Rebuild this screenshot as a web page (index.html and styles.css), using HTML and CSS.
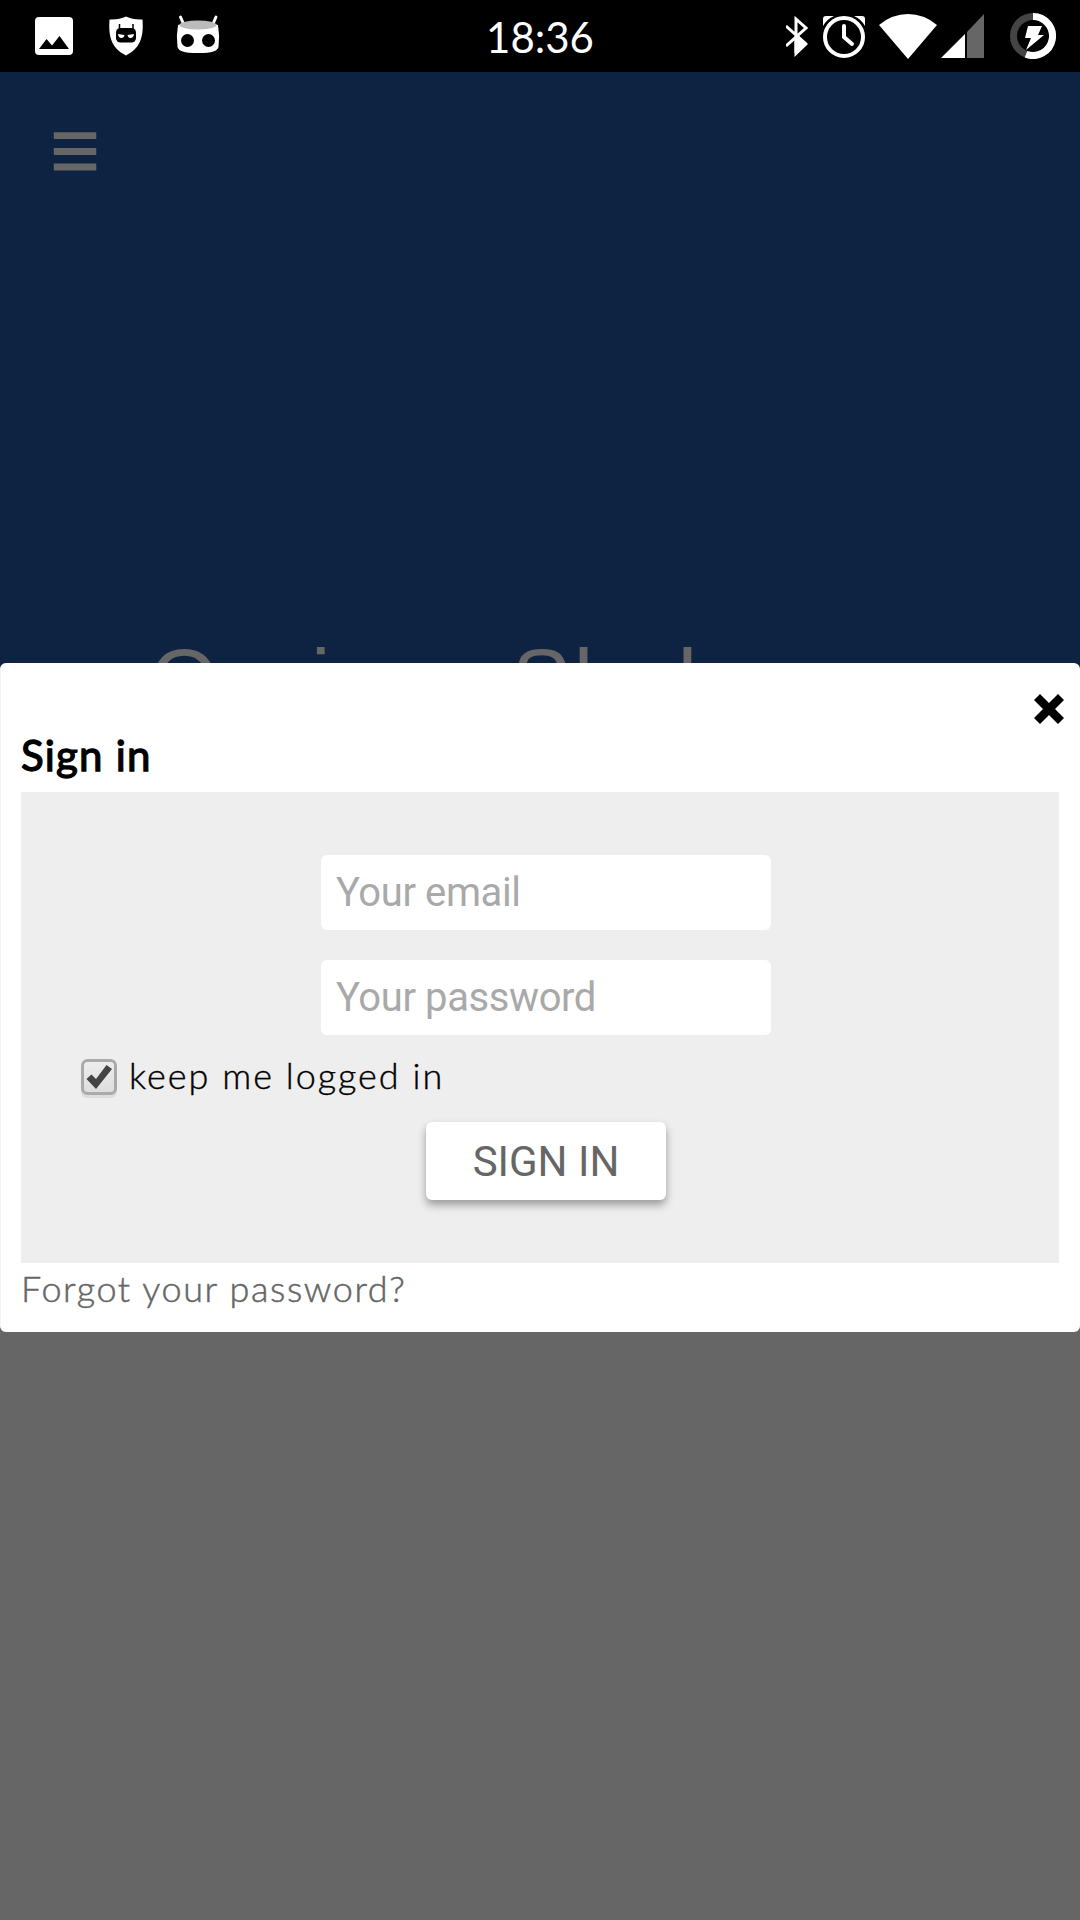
FILE: index.html
```html
<!DOCTYPE html>
<html lang="en">
<head>
<meta charset="utf-8">
<title>Sign in</title>
<link rel="stylesheet" href="styles.css">
</head>
<body>
<header class="status">
  <div class="status-left">
    <svg width="38" height="38" viewBox="0 0 38 38"><path fill="#fff" fill-rule="evenodd" d="M4 0H34Q38 0 38 4V34Q38 38 34 38H4Q0 38 0 34V4Q0 0 4 0ZM4 32H34L24.500 19L17 28.500L11.500 22Z"/></svg>
    <svg width="34" height="40" viewBox="0 0 34 40"><path fill="#fff" d="M17 .5Q24 4 33.500 3.500C34.500 18 33 32 17 39.500C1 32-.5 18 .5 3.500Q10 4 17 .5Z"/><path d="M10.500 8V13M24 8V13" stroke="#000" stroke-width="1.500"/><rect x="7" y="12" width="20" height="14.500" rx="4.500"/><path fill="#fff" d="M9 18L15.500 19Q15 22 12.500 22Q9.500 22 9 18ZM25 18L18.500 19Q19 22 21.500 22Q24.500 22 25 18Z"/></svg>
    <svg width="44" height="40" viewBox="0 0 44 40"><path d="M4.500 3L8 11M40 3L36.500 11" stroke="#fff" stroke-width="3" stroke-linecap="round"/><path fill="#fff" d="M2 11Q22 4 42 11Q44 22 42.500 33C41 37 37 39 22 39S3 37 1.500 33Q0 22 2 11Z"/><ellipse cx="22" cy="11" rx="18.500" ry="4.500" fill="#bbb"/><circle cx="11.500" cy="26.500" r="6.500"/><circle cx="32.500" cy="26.500" r="6.500"/></svg>
  </div>
  <time class="clock">18:36</time>
  <div class="status-right">
    <svg class="bt" width="22" height="42" viewBox="0 0 22 42"><path fill="none" stroke="#fff" stroke-width="3" d="M0 11L20 29M0 31L20 13L10 4V38"/><path fill="#fff" d="M8.500 21H13L22 29L8.500 42Z"/></svg>
    <svg class="alarm" width="42" height="43" viewBox="0 0 42 43"><circle cx="21" cy="22" r="19" fill="none" stroke="#fff" stroke-width="4"/><path fill="#fff" d="M0 11V4Q0 1 3 1H11Q4 4 0 11ZM42 11V4Q42 1 39 1H31Q38 4 42 11Z"/><path fill="none" stroke="#fff" stroke-width="4" stroke-linecap="round" d="M21 11V22L29 29"/></svg>
    <svg class="wifi" width="58" height="45" viewBox="0 0 58 45"><path fill="#fff" d="M0 11Q13 0 29 0T58 11L29 45Z"/></svg>
    <svg class="signal" width="43" height="44" viewBox="0 0 43 44"><path fill="#fff" d="M0 44L24 20V44Z"/><path fill="#666" d="M26 18L43 0V44H26Z"/></svg>
    <svg width="46" height="46" viewBox="0 0 46 46"><circle cx="23" cy="23" r="19.500" fill="none" stroke="#444" stroke-width="7"/><path fill="none" stroke="#fff" stroke-width="7" d="M23 3.500A19.500 19.500 0 1 1 16 41.200"/><path fill="#fff" d="M18 13H32L28 22H34L16 37L21 25H15Z"/></svg>
  </div>
</header>
<main class="hero">
  <svg class="menu" width="44" height="40" viewBox="0 0 44 40"><path fill="#666" d="M.8 1.200H43.300V8H.8ZM.8 17H43.300V24H.8ZM.8 32.500H43.300V39.500H.8Z"/></svg>
  <h1 class="hero-title"><span class="brand">Ossian</span><span class="product">Slad</span></h1>
</main>
<section class="dialog">
  <button class="close" aria-label="Close"><svg width="30" height="30" viewBox="0 0 30 30"><path fill="#000" d="M6 0L15 9L24 0L30 6L21 15L30 24L24 30L15 21L6 30L0 24L9 15L0 6Z"/></svg></button>
  <h2 class="heading">Sign in</h2>
  <form class="panel">
    <input class="field" type="email" placeholder="Your email">
    <input class="field" type="password" placeholder="Your password">
    <label class="keep"><svg width="36" height="39" viewBox="0 0 36 39"><defs><linearGradient id="box" x1="0" y1="0" x2="0" y2="1"><stop offset="0" stop-color="#eee"/><stop offset="1" stop-color="#ddd"/></linearGradient></defs><rect y="3" width="36" height="36" rx="6" fill="#ddd"/><rect x="1.500" y="1.500" width="33" height="33" rx="5" fill="url(#box)" stroke="#aaa" stroke-width="3"/><path fill="#444" stroke="none" d="M5.500 20L10.500 15.500L15 20L25.500 6L31 10L15 30Z"/></svg><span class="keep-text">keep me logged in</span></label>
    <button class="submit" type="button">SIGN IN</button>
  </form>
  <a class="forgot">Forgot your password?</a>
</section>
</body>
</html>
```
FILE: styles.css
```css
* { box-sizing: border-box; }
body { margin: 0; width: 1080px; height: 1920px; overflow: hidden; position: relative; background: #666; font-family: Lato, sans-serif; }
svg { display: block; flex: none; }
.status { height: 72px; background: #000; display: grid; grid-template-columns: 1fr auto 1fr; align-items: center; padding: 0 24px 0 35px; }
.status-left { display: flex; align-items: center; gap: 36px; }
.status-left svg:last-child { margin-left: -3px; margin-top: -4px; }
.clock { color: #fff; font-size: 42px; line-height: 72px; padding-top: 1px; height: 72px; margin-left: -11px; }
.status-right { display: flex; align-items: center; justify-content: flex-end; }
.bt { margin-right: 15px; }
.alarm { margin-right: 14px; }
.wifi { margin-right: 4px; }
.signal { margin-right: 26px; }
.hero { height: 900px; background: #0e2242; padding: 59px 53px; }
.hero-title { margin: 459px 0 0 97px; display: flex; color: #666; font-family: "Liberation Sans", sans-serif; font-size: 88px; font-weight: 400; line-height: 100px; white-space: nowrap; }
.brand { width: 362px; letter-spacing: 1.5px; }
.product { letter-spacing: 3px; }
.dialog { position: absolute; top: 663px; left: 0; width: 1080px; height: 669px; background: #fff; border-radius: 6px; border-left: 1px solid #f3f3f3; padding: 31px 21px 0 20px; display: flex; flex-direction: column; align-items: stretch; }
.close { align-self: flex-end; border: 0; padding: 0; background: none; margin-right: -5px; height: 30px; }
.heading { margin: 0 0 6px; height: 62px; line-height: 62px; font-size: 42px; font-weight: 400; letter-spacing: 1.2px; -webkit-text-stroke: 1.3px #000; }
.panel { height: 471px; background: #eee; padding: 63px 0 0 60px; display: flex; flex-direction: column; }
.field { width: 450px; height: 75px; margin: 0 0 30px 240px; border: 0; border-radius: 6px; background: #fff; padding: 0 15px; font-family: Roboto, sans-serif; font-size: 40px; letter-spacing: -.4px; outline: 0; }
.field::placeholder { color: #a9a9a9; opacity: 1; }
.keep { display: flex; align-items: center; gap: 12px; height: 39px; margin-top: -6px; font-size: 36px; line-height: 39px; font-weight: 300; -webkit-text-stroke: .4px #000; }
.keep-text { white-space: nowrap; letter-spacing: 2px; margin-top: -6px; }
.submit { width: 240px; height: 78px; margin: 24px 0 0 345px; border: 0; border-radius: 6px; background: #fff; color: #666; font-family: Roboto, sans-serif; font-size: 42px; padding: 0; box-shadow: 0 5px 8px rgba(0,0,0,.35); }
.forgot { height: 56px; line-height: 50px; font-size: 36px; font-weight: 300; letter-spacing: 1.6px; color: #666; -webkit-text-stroke: .5px #666; }
```
